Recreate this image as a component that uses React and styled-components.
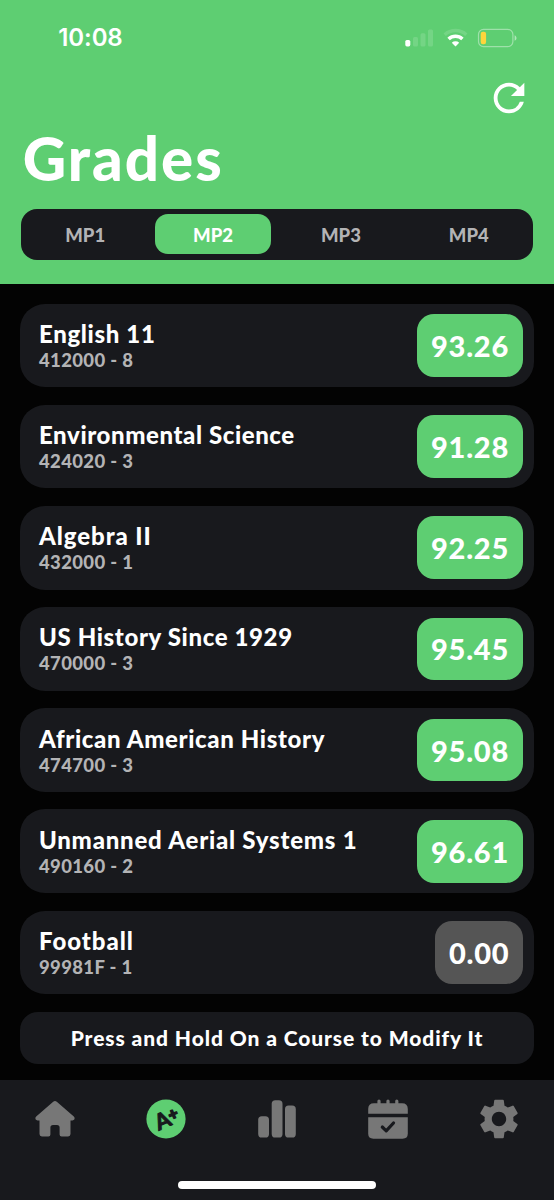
import React from "react";
import styled, { createGlobalStyle } from "styled-components";
import { MdRefresh, MdSettings } from "react-icons/md";

const green = "#5ece72";
const panel = "#18191d";
const muted = "#b3b3b5";
const iconGray = "#777777";

const periods = ["MP1", "MP2", "MP3", "MP4"];

const courses = [
  { name: "English 11", code: "412000 - 8", grade: "93.26", spacing: 0.65 },
  { name: "Environmental Science", code: "424020 - 3", grade: "91.28", spacing: 0.58 },
  { name: "Algebra II", code: "432000 - 1", grade: "92.25", spacing: 0.93 },
  { name: "US History Since 1929", code: "470000 - 3", grade: "95.45", spacing: 0.63 },
  { name: "African American History", code: "474700 - 3", grade: "95.08", spacing: 0.63 },
  { name: "Unmanned Aerial Systems 1", code: "490160 - 2", grade: "96.61", spacing: 0.77 },
  { name: "Football", code: "99981F - 1", grade: "0.00", spacing: 0.95, empty: true },
];

export default function App() {
  return (
    <Screen>
      <GlobalStyle />
      <Header>
        <StatusBar>
          <Time>10:08</Time>
          <StatusIcons />
        </StatusBar>
        <Actions>
          <RefreshButton aria-label="Refresh">
            <MdRefresh size={46} />
          </RefreshButton>
        </Actions>
        <Title>Grades</Title>
        <Periods>
          {periods.map((period) => (
            <Period key={period} $active={period === "MP2"}>
              {period}
            </Period>
          ))}
        </Periods>
      </Header>
      <CourseList>
        {courses.map((course) => (
          <Course key={course.code}>
            <CourseInfo>
              <CourseName $spacing={course.spacing}>{course.name}</CourseName>
              <CourseCode>{course.code}</CourseCode>
            </CourseInfo>
            <Grade $empty={course.empty}>{course.grade}</Grade>
          </Course>
        ))}
        <Hint>Press and Hold On a Course to Modify It</Hint>
      </CourseList>
      <TabBar>
        <Tabs>
          <Tab aria-label="Home">
            <HomeIcon />
          </Tab>
          <Tab aria-label="Grades">
            <GradesIcon />
          </Tab>
          <Tab aria-label="Stats">
            <BarsIcon />
          </Tab>
          <Tab aria-label="Calendar">
            <CalendarIcon />
          </Tab>
          <Tab aria-label="Settings">
            <MdSettings size={48} />
          </Tab>
        </Tabs>
        <HomeIndicator />
      </TabBar>
    </Screen>
  );
}

function StatusIcons() {
  return (
    <svg width="114" height="24" viewBox="0 0 114 24" fill="none">
      <rect x="0.3" y="14" width="5" height="6.4" rx="1.6" fill="white" />
      <g fill="white" fillOpacity="0.14">
        <rect x="8" y="11" width="5" height="9.4" rx="1.5" />
        <rect x="15.5" y="7.2" width="5" height="13.2" rx="1.5" />
        <rect x="23" y="3.5" width="5" height="16.9" rx="1.5" />
      </g>
      <path
        d="M39.7 8.7a16 16 0 0 1 21.6 0"
        stroke="white"
        strokeOpacity="0.14"
        strokeWidth="3.4"
      />
      <path d="M43.6 13a10.2 10.2 0 0 1 13.8 0" stroke="white" strokeWidth="3.6" />
      <path d="M46.8 16.8a5.4 5.4 0 0 1 7.4 0l-3.7 3.8z" fill="white" />
      <rect
        x="73.5"
        y="3.4"
        width="34.4"
        height="17.2"
        rx="5"
        stroke="white"
        strokeOpacity="0.4"
        strokeWidth="1.2"
      />
      <rect x="75.7" y="5.8" width="5.4" height="12.4" rx="2.2" fill="#fdd53c" />
      <path d="M109.6 9.2c2.5 1 2.5 4.6 0 5.6z" fill="white" fillOpacity="0.5" />
    </svg>
  );
}

function HomeIcon() {
  return (
    <svg width="40" height="40" viewBox="0 0 40 40" fill="currentColor">
      <path d="M18.2 2.8Q20 1.2 21.8 2.8L38.8 17.6Q40.1 18.9 39.3 20.6Q38.8 21.4 37.4 21.4H35.5V35Q35.5 37.4 33.1 37.4H26.6Q24.6 37.4 24.6 35.4V28.6Q24.6 26 22 26H18Q15.4 26 15.4 28.6V35.4Q15.4 37.4 13.4 37.4H6.9Q4.5 37.4 4.5 35V21.4H2.6Q1.2 21.4 0.7 20.6Q-0.1 18.9 1.2 17.6Z" />
    </svg>
  );
}

function GradesIcon() {
  return (
    <svg width="40" height="40" viewBox="0 0 40 40">
      <circle cx="20" cy="20" r="19.6" fill={green} />
      <IconText x="16.6" y="29.2" $size={22} transform="rotate(-24 16.6 21.5)">
        A
      </IconText>
      <IconText x="27" y="20.6" $size={16} $stroke={1.8} transform="rotate(-24 27 15)">
        +
      </IconText>
    </svg>
  );
}

function BarsIcon() {
  return (
    <svg width="40" height="40" viewBox="0 0 40 40" fill="currentColor">
      <rect x="1.2" y="17.2" width="10.8" height="21.3" rx="3.6" />
      <rect x="14.7" y="1.2" width="10.8" height="37.3" rx="3.6" />
      <rect x="28" y="6.6" width="10.8" height="31.9" rx="3.6" />
    </svg>
  );
}

function CalendarIcon() {
  return (
    <svg width="40" height="40" viewBox="0 0 40 40" fill="currentColor">
      <path d="M9.4 5V2Q9.4 0.4 11 0.4T12.6 2V4.2H18.4V2Q18.4 0.4 20 0.4T21.6 2V4.2H27.2V2Q27.2 0.4 28.8 0.4T30.4 2V4.2H34Q39.8 4.2 39.8 10V14.8H0.2V10Q0.2 4.2 6 4.2H9.4Z" />
      <path d="M0.2 18.2H39.8V34.6Q39.8 39.8 34.6 39.8H5.4Q0.2 39.8 0.2 34.6Z" />
      <path
        d="M14.3 28L18.2 31.8L25.5 24"
        fill="none"
        stroke={panel}
        strokeWidth="3.2"
        strokeLinecap="round"
        strokeLinejoin="round"
      />
    </svg>
  );
}

const GlobalStyle = createGlobalStyle`
  * {
    box-sizing: border-box;
  }

  body {
    margin: 0;
    background: #030303;
  }

  button {
    border: none;
    padding: 0;
    background: none;
    font: inherit;
  }
`;

const Screen = styled.div`
  display: flex;
  flex-direction: column;
  width: 554px;
  height: 1200px;
  overflow: hidden;
  background: #030303;
  color: white;
  font-family: Lato, "Open Sans", sans-serif;
  font-weight: 900;
`;

const Header = styled.header`
  height: 283.7px;
  padding: 0 21.3px;
  background: ${green};
`;

const StatusBar = styled.div`
  display: flex;
  justify-content: space-between;
  align-items: center;
  height: 75px;
  padding: 0 14px 0 37px;
`;

const Time = styled.span`
  font-family: Inter, sans-serif;
  font-size: 24px;
  font-weight: 600;
  letter-spacing: -0.1px;
`;

const Actions = styled.div`
  display: flex;
  justify-content: flex-end;
  height: 46px;
  padding-right: 0.7px;
`;

const RefreshButton = styled.button`
  width: 46px;
  height: 46px;
  color: white;

  svg {
    display: block;
  }
`;

const Title = styled.h1`
  margin: 5px 0 18px 1.5px;
  font-size: 60px;
  font-weight: 900;
  line-height: 65px;
  letter-spacing: 2px;
`;

const Periods = styled.nav`
  display: flex;
  height: 50.6px;
  border-radius: 16px;
  background: ${panel};
`;

const Period = styled.button`
  flex: 1;
  margin: 5.3px 5.7px;
  padding-top: 1px;
  border-radius: 13px;
  background: ${({ $active }) => ($active ? green : "transparent")};
  color: ${({ $active }) => ($active ? "white" : muted)};
  font-size: 18.5px;
`;

const CourseList = styled.main`
  display: flex;
  flex: 1;
  flex-direction: column;
  gap: 17.5px;
  padding: 20px 20.3px 0;
`;

const Course = styled.section`
  display: flex;
  justify-content: space-between;
  align-items: center;
  height: 83.65px;
  padding: 0 10.5px 0 18.7px;
  border-radius: 25px;
  background: ${panel};
`;

const CourseInfo = styled.div`
  display: flex;
  flex-direction: column;
  padding-top: 2px;
`;

const CourseName = styled.span`
  font-size: 24px;
  line-height: 28px;
  letter-spacing: ${({ $spacing }) => $spacing}px;
  white-space: nowrap;
`;

const CourseCode = styled.span`
  color: ${muted};
  font-size: 18.5px;
  line-height: 25px;
  letter-spacing: 0.35px;
`;

const Grade = styled.div`
  display: flex;
  justify-content: center;
  align-items: center;
  width: ${({ $empty }) => ($empty ? 88 : 106.4)}px;
  height: 62.6px;
  border-radius: 17px;
  background: ${({ $empty }) => ($empty ? "#555555" : green)};
  font-size: 29px;
  letter-spacing: 0.8px;
`;

const Hint = styled.div`
  display: flex;
  justify-content: center;
  align-items: center;
  height: 52.5px;
  border-radius: 18px;
  background: ${panel};
  font-size: 21px;
  letter-spacing: 0.9px;
`;

const TabBar = styled.footer`
  display: flex;
  flex-direction: column;
  align-items: center;
  justify-content: space-between;
  height: 120px;
  padding-bottom: 11.3px;
  background: ${panel};
`;

const Tabs = styled.div`
  display: flex;
  width: 100%;
  height: 78px;
`;

const Tab = styled.button`
  display: flex;
  flex: 1;
  justify-content: center;
  align-items: center;
  color: ${iconGray};
`;

const HomeIndicator = styled.div`
  width: 198px;
  height: 7.6px;
  border-radius: 4px;
  background: white;
`;

const IconText = styled.text`
  fill: ${panel};
  stroke: ${panel};
  stroke-width: ${({ $stroke = 1 }) => $stroke};
  stroke-linejoin: round;
  font-family: Lato, sans-serif;
  font-size: ${({ $size }) => $size}px;
  font-weight: 700;
  text-anchor: middle;
`;
